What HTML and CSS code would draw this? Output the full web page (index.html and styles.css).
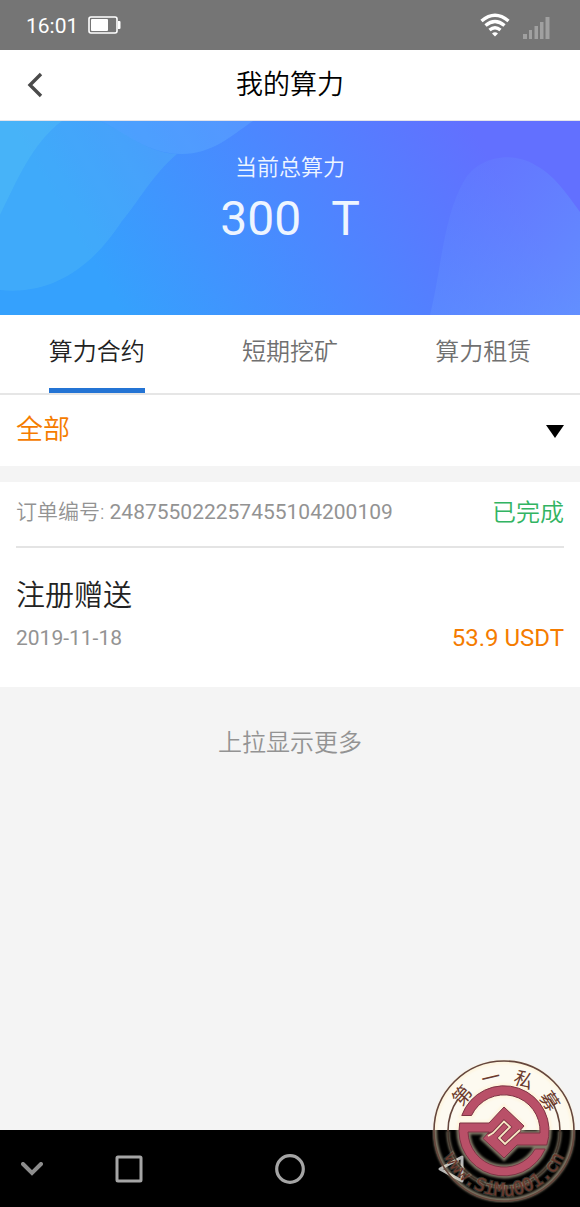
FILE: index.html
```html
<!DOCTYPE html>
<html lang="zh-CN">
<head>
<meta charset="utf-8">
<meta name="viewport" content="width=device-width, initial-scale=1">
<title>我的算力</title>
<link rel="stylesheet" href="styles.css">
</head>
<body>
<div class="status">
  <span class="status-time">16:01</span>
  <svg class="battery" width="33" height="18" viewBox="0 0 33 18" aria-hidden="true">
    <rect x="1" y="1" width="28" height="16" rx="2" fill="none" stroke="#fff" stroke-width="1.6"/>
    <rect x="3" y="3" width="17" height="12" rx="1" fill="#fff"/>
    <path d="M30 5h1.5q1 0 1 1v6q0 1-1 1H30z" fill="#fff"/>
  </svg>
  <svg class="wifi" width="30" height="24" viewBox="0 0 30 24" fill="none" stroke="#fff" stroke-width="3.4" aria-hidden="true">
    <path d="M1.500 8Q15-3.600 28.500 8M5.500 12.500Q15 4.500 24.500 12.500M9.500 17Q15 12.500 20.500 17"/>
    <path d="M12 20.500Q15 18 18 20.500L15 23.500z" fill="#fff" stroke="none"/>
  </svg>
  <svg class="signal" width="27" height="22" viewBox="0 0 27 22" fill="#a0a0a0" aria-hidden="true">
    <path d="M0 17h4v5H0zM6 13h3v9H6zM11.500 9h3.500v13h-3.500zM17 5h3.500v17H17zM22.500 0h4v22h-4z"/>
  </svg>
</div>

<header class="header">
  <button class="back" type="button" aria-label="返回">
    <svg width="16" height="26" viewBox="0 0 16 26" fill="none" stroke="#4a4a4a" stroke-width="3.4"><path d="M14 2 3 13l11 11"/></svg>
  </button>
  <h1 class="title">我的算力</h1>
</header>

<main class="main">
  <section class="hero">
    <svg class="hero-art" viewBox="0 0 580 194" preserveAspectRatio="none" aria-hidden="true">
      <defs>
        <linearGradient id="sky" gradientUnits="userSpaceOnUse" x1="110" y1="170" x2="450" y2="-30">
          <stop offset="0" stop-color="#35a1fd"/>
          <stop offset=".5" stop-color="#4b88ff"/>
          <stop offset="1" stop-color="#6270ff"/>
        </linearGradient>
        <linearGradient id="dome" x1="1" y1="1" x2="0" y2="0">
          <stop offset="0" stop-color="#62a4ff" stop-opacity=".6"/>
          <stop offset="1" stop-color="#6a8cff" stop-opacity=".1"/>
        </linearGradient>
      </defs>
      <path fill="url(#sky)" d="M0 0h580v194H0z"/>
      <path fill="#5fc8f4" fill-opacity=".24" d="M0 0H100C127 12 147 32 177 33C152 54 137 83 122 100C96 140 57 175 0 169z"/>
      <path fill="#5ecff5" fill-opacity=".25" d="M0 0H62C32 22 17 60 0 94z"/>
      <path fill="#70c0ff" fill-opacity=".26" d="M100 0C127 12 147 33 182 33C212 33 231 15 253 0z"/>
      <path fill="url(#dome)" d="M430 194C441 151 443 96 464 60C477 37 510 29 535 44C555 54 569 76 580 91V194z"/>
    </svg>
    <div class="hero-label">当前总算力</div>
    <div class="hero-value"><span>300</span><span>T</span></div>
  </section>

  <nav class="tabs">
    <button class="tab tab-active" type="button">算力合约</button>
    <button class="tab" type="button">短期挖矿</button>
    <button class="tab" type="button">算力租赁</button>
  </nav>

  <div class="filter">
    <select class="filter-select" aria-label="筛选"><option>全部</option></select>
    <svg class="filter-arrow" width="18" height="13" viewBox="0 0 18 13" aria-hidden="true"><path d="M0 0h18L9 13z"/></svg>
  </div>

  <article class="card">
    <div class="order">
      <span class="order-no">订单编号: <span class="digits">248755022257455104200109</span></span>
      <span class="order-state">已完成</span>
    </div>
    <div class="detail">
      <h2 class="detail-title">注册赠送</h2>
      <div class="detail-row">
        <span class="detail-date digits">2019-11-18</span>
        <span class="detail-sum digits">53.9 USDT</span>
      </div>
    </div>
  </article>

  <p class="more">上拉显示更多</p>
</main>

<footer class="navbar">
  <button class="key key-hide" type="button" aria-label="收起">
    <svg width="22" height="14" viewBox="0 0 22 14" fill="none" stroke="#8d8d8d" stroke-width="4" stroke-linecap="round"><path d="M2 2l9 9 9-9"/></svg>
  </button>
  <button class="key" type="button" aria-label="最近">
    <svg width="28" height="28" viewBox="0 0 28 28" fill="none" stroke="#a5a5a5" stroke-width="3"><rect x="2" y="2" width="24" height="24" rx="1"/></svg>
  </button>
  <button class="key" type="button" aria-label="主页">
    <svg width="32" height="32" viewBox="0 0 32 32" fill="none" stroke="#a5a5a5" stroke-width="3.2"><circle cx="16" cy="16" r="13.3"/></svg>
  </button>
  <button class="key" type="button" aria-label="后退">
    <svg width="28" height="30" viewBox="0 0 28 30" fill="none" stroke="#b5b5b5" stroke-width="3" stroke-linejoin="round"><path d="M3 15 25 3v24z"/></svg>
  </button>
</footer>

<svg class="seal" width="144" height="144" viewBox="-72 -72 144 144" role="img" aria-label="第一私募">
  <defs>
    <path id="arc-top" d="M-48 0A48 48 0 0 1 48 0"/>
    <path id="arc-bottom" d="M-65 0A65 65 0 0 0 65 0"/>
    <path id="mark" d="M-42.250-15.500A45 45 0 0 1 42.770 14H13L0 27-21 7.500-15 1H-36A36 36 0 0 0 31.200 18H41.200A45 45 0 0 1-44.300-8H-15L0-24 20-5 14 2H36A36 36 0 0 0-32.500-15.500Z"/>
    <filter id="halo" x="-20%" y="-20%" width="140%" height="140%"><feGaussianBlur stdDeviation="1.2"/></filter>
  </defs>
  <path d="M-70-1A70 70 0 0 1 70-1Z" fill="#fffbef" fill-opacity=".8"/>
  <g filter="url(#halo)" fill="none" stroke="#fff0cc" stroke-opacity=".5">
    <circle r="69" stroke-width="4"/>
    <path d="M-56 0A56 56 0 0 0 56 0" stroke-width="3"/>
    <use href="#mark" stroke-width="5"/>
  </g>
  <circle class="seal-line" r="70"/>
  <path class="seal-line" d="M-56 0A56 56 0 0 1-46-32M46-32A56 56 0 0 1 56 0"/>
  <path class="seal-line seal-faint" d="M-56 0A56 56 0 0 0 56 0"/>
  <use href="#mark" fill="#b95068" stroke="#7e3445" stroke-width="1"/>
  <path d="M-16 3-11 2 0-9.500 6-4-5 7 1 13 16-1" fill="none" stroke="#7e3445" stroke-width="3.4"/>
  <path d="M-16 5-11 2 0-9.500 6-4-5 7 1 13 16-1" fill="none" stroke="#f8e9c4" stroke-width="1.8"/>
  <text class="seal-name"><textPath href="#arc-top" startOffset="52%">第&#160;&#160;一&#160;&#160;私&#160;&#160;募</textPath></text>
  <text class="seal-site"><textPath href="#arc-bottom" startOffset="50%">www.SiMu001.cn</textPath></text>
</svg>
</body>
</html>
```
FILE: styles.css
```css
* {
  box-sizing: border-box;
}

body {
  margin: 0;
  min-height: 100vh;
  position: relative;
  display: flex;
  flex-direction: column;
  background: #f4f4f4;
  color: #222;
  font-family: Roboto, "Noto Sans CJK SC", sans-serif;
  font-weight: 350;
}

button,
select {
  border: 0;
  padding: 0;
  background: none;
  color: inherit;
  font: inherit;
}

.status {
  display: flex;
  align-items: center;
  height: 50px;
  padding: 0 30px 0 26px;
  background: #757575;
  color: #fff;
}

.status-time {
  padding-top: 2px;
  font-size: 21px;
  font-weight: 400;
}

.battery {
  margin-left: 10px;
}

.wifi {
  margin-left: auto;
}

.signal {
  margin: 6px 0 0 13px;
}

.header {
  display: grid;
  grid-template-columns: 64px 1fr 64px;
  align-items: center;
  height: 71px;
  border-bottom: 1px solid #e4e4ea;
  background: #fff;
}

.back {
  display: flex;
  padding-left: 27px;
}

.title {
  margin: 0;
  color: #000;
  font-size: 27px;
  font-weight: 350;
  line-height: 40px;
  text-align: center;
}

.main {
  flex: 1;
}

.hero {
  position: relative;
  height: 194px;
  padding-top: 30px;
  color: #eef5ff;
  text-align: center;
}

.hero-art {
  position: absolute;
  inset: 0;
  width: 100%;
  height: 100%;
}

.hero-label,
.hero-value {
  position: relative;
}

.hero-label {
  font-size: 22px;
  line-height: 34px;
}

.hero-value {
  display: flex;
  justify-content: center;
  gap: 30px;
  font-size: 48px;
  font-weight: 400;
  line-height: 68px;
}

.tabs {
  display: grid;
  grid-template-columns: repeat(3, 1fr);
  justify-items: center;
  border-bottom: 2px solid #e6e6e6;
  background: #fff;
}

.tab {
  height: 78px;
  padding-bottom: 4px;
  border-bottom: 5px solid transparent;
  color: #707070;
  font-size: 24px;
}

.tab-active {
  border-color: #2474d4;
  color: #222;
}

.filter {
  position: relative;
  height: 71px;
  background: #fff;
}

.filter-select {
  width: 100%;
  height: 69px;
  padding: 0 16px;
  appearance: none;
  color: #f57c00;
  font-size: 27px;
}

.filter-arrow {
  position: absolute;
  top: 30px;
  right: 16px;
  pointer-events: none;
}

.card {
  margin-top: 16px;
  padding: 0 16px 29px;
  background: #fff;
}

.order,
.detail-row {
  display: flex;
  justify-content: space-between;
  align-items: center;
}

.order {
  height: 66px;
  padding-bottom: 8px;
  border-bottom: 2px solid #e4e4e4;
}

.order-no,
.detail-date {
  color: #939393;
  font-size: 21px;
}

.digits {
  font-weight: 400;
}

.order-state {
  color: #32b462;
  font-size: 24px;
}

.detail {
  padding-top: 26px;
}

.detail-title {
  margin: 0;
  font-size: 29px;
  font-weight: 350;
  line-height: 44px;
}

.detail-row {
  height: 40px;
}

.detail-sum {
  color: #f57c00;
  font-size: 24px;
}

.more {
  margin: 38px 0 0;
  color: #939393;
  font-size: 24px;
  line-height: 36px;
  text-align: center;
}

.navbar {
  display: grid;
  grid-template-columns: 48px repeat(3, 1fr) 48px;
  height: 77px;
  background: #000;
}

.key {
  display: flex;
  align-items: center;
  justify-content: center;
}

.key-hide {
  justify-content: flex-end;
  padding-right: 5px;
}

.seal {
  position: absolute;
  right: 4px;
  bottom: 4px;
}

.seal-line {
  fill: none;
  stroke: #65463c;
  stroke-width: 1.6px;
}

.seal-faint {
  stroke: #44352c;
}

.seal-name,
.seal-site {
  text-anchor: middle;
  fill: #6b3a2e;
}

.seal-name {
  font-family: "Liberation Sans", "Noto Sans CJK SC", sans-serif;
  font-size: 19px;
  font-weight: 400;
}

.seal-site {
  font-family: "DejaVu Sans Mono", monospace;
  font-size: 18px;
  font-weight: 400;
  paint-order: stroke;
  stroke: #fff3d6;
  stroke-opacity: 0.2;
  stroke-width: 2px;
}
```
